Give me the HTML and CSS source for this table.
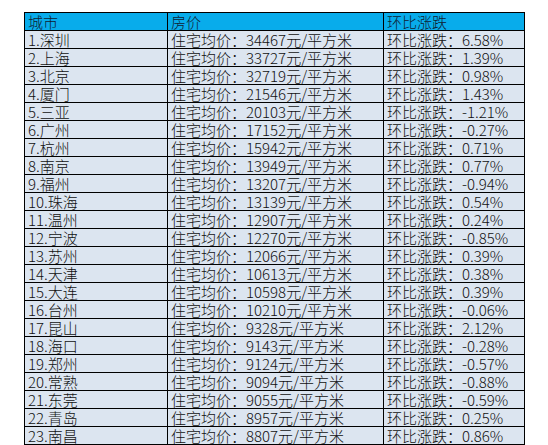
FILE: index.html
```html
<!DOCTYPE html>
<html lang="zh-CN">
<head>
<meta charset="utf-8">
<title>城市房价</title>
<link rel="stylesheet" href="styles.css">
</head>
<body>
<table class="sheet">
  <colgroup><col class="c1"><col class="c2"><col class="c3"></colgroup>
  <thead>
    <tr class="head"><th>城市</th><th>房价</th><th>环比涨跌</th></tr>
  </thead>
  <tbody>
    <tr><td>1.深圳</td><td>住宅均价：34467元/平方米</td><td>环比涨跌：6.58%</td></tr>
    <tr><td>2.上海</td><td>住宅均价：33727元/平方米</td><td>环比涨跌：1.39%</td></tr>
    <tr><td>3.北京</td><td>住宅均价：32719元/平方米</td><td>环比涨跌：0.98%</td></tr>
    <tr><td>4.厦门</td><td>住宅均价：21546元/平方米</td><td>环比涨跌：1.43%</td></tr>
    <tr><td>5.三亚</td><td>住宅均价：20103元/平方米</td><td>环比涨跌：-1.21%</td></tr>
    <tr><td>6.广州</td><td>住宅均价：17152元/平方米</td><td>环比涨跌：-0.27%</td></tr>
    <tr><td>7.杭州</td><td>住宅均价：15942元/平方米</td><td>环比涨跌：0.71%</td></tr>
    <tr><td>8.南京</td><td>住宅均价：13949元/平方米</td><td>环比涨跌：0.77%</td></tr>
    <tr><td>9.福州</td><td>住宅均价：13207元/平方米</td><td>环比涨跌：-0.94%</td></tr>
    <tr><td>10.珠海</td><td>住宅均价：13139元/平方米</td><td>环比涨跌：0.54%</td></tr>
    <tr><td>11.温州</td><td>住宅均价：12907元/平方米</td><td>环比涨跌：0.24%</td></tr>
    <tr><td>12.宁波</td><td>住宅均价：12270元/平方米</td><td>环比涨跌：-0.85%</td></tr>
    <tr><td>13.苏州</td><td>住宅均价：12066元/平方米</td><td>环比涨跌：0.39%</td></tr>
    <tr><td>14.天津</td><td>住宅均价：10613元/平方米</td><td>环比涨跌：0.38%</td></tr>
    <tr><td>15.大连</td><td>住宅均价：10598元/平方米</td><td>环比涨跌：0.39%</td></tr>
    <tr><td>16.台州</td><td>住宅均价：10210元/平方米</td><td>环比涨跌：-0.06%</td></tr>
    <tr><td>17.昆山</td><td>住宅均价：9328元/平方米</td><td>环比涨跌：2.12%</td></tr>
    <tr><td>18.海口</td><td>住宅均价：9143元/平方米</td><td>环比涨跌：-0.28%</td></tr>
    <tr><td>19.郑州</td><td>住宅均价：9124元/平方米</td><td>环比涨跌：-0.57%</td></tr>
    <tr><td>20.常熟</td><td>住宅均价：9094元/平方米</td><td>环比涨跌：-0.88%</td></tr>
    <tr><td>21.东莞</td><td>住宅均价：9055元/平方米</td><td>环比涨跌：-0.59%</td></tr>
    <tr><td>22.青岛</td><td>住宅均价：8957元/平方米</td><td>环比涨跌：0.25%</td></tr>
    <tr><td>23.南昌</td><td>住宅均价：8807元/平方米</td><td>环比涨跌：0.86%</td></tr>
  </tbody>
</table>
</body>
</html>
```

FILE: styles.css
```css
html, body {
  margin: 0;
  padding: 0;
  background: #ffffff;
}

body {
  font-family: "Noto Sans CJK SC", "Noto Sans", sans-serif;
  font-size: 15px;
  font-weight: 300;
  color: #111111;
  padding: 12px 0 0 24px;
}

.sheet {
  border-collapse: collapse;
  table-layout: fixed;
  width: 500px;
}

.c1 { width: 143px; }
.c2 { width: 216px; }
.c3 { width: 141px; }

.sheet th,
.sheet td {
  border: 1px solid #000000;
  height: 17px;
  padding: 0 0 0 3px;
  line-height: 17px;
  text-align: left;
  white-space: nowrap;
  overflow: hidden;
  vertical-align: bottom;
}

.sheet th {
  font-weight: 300;
  background: #08aceb;
  color: #102030;
}

.sheet td {
  background: #dce5f0;
}
```
